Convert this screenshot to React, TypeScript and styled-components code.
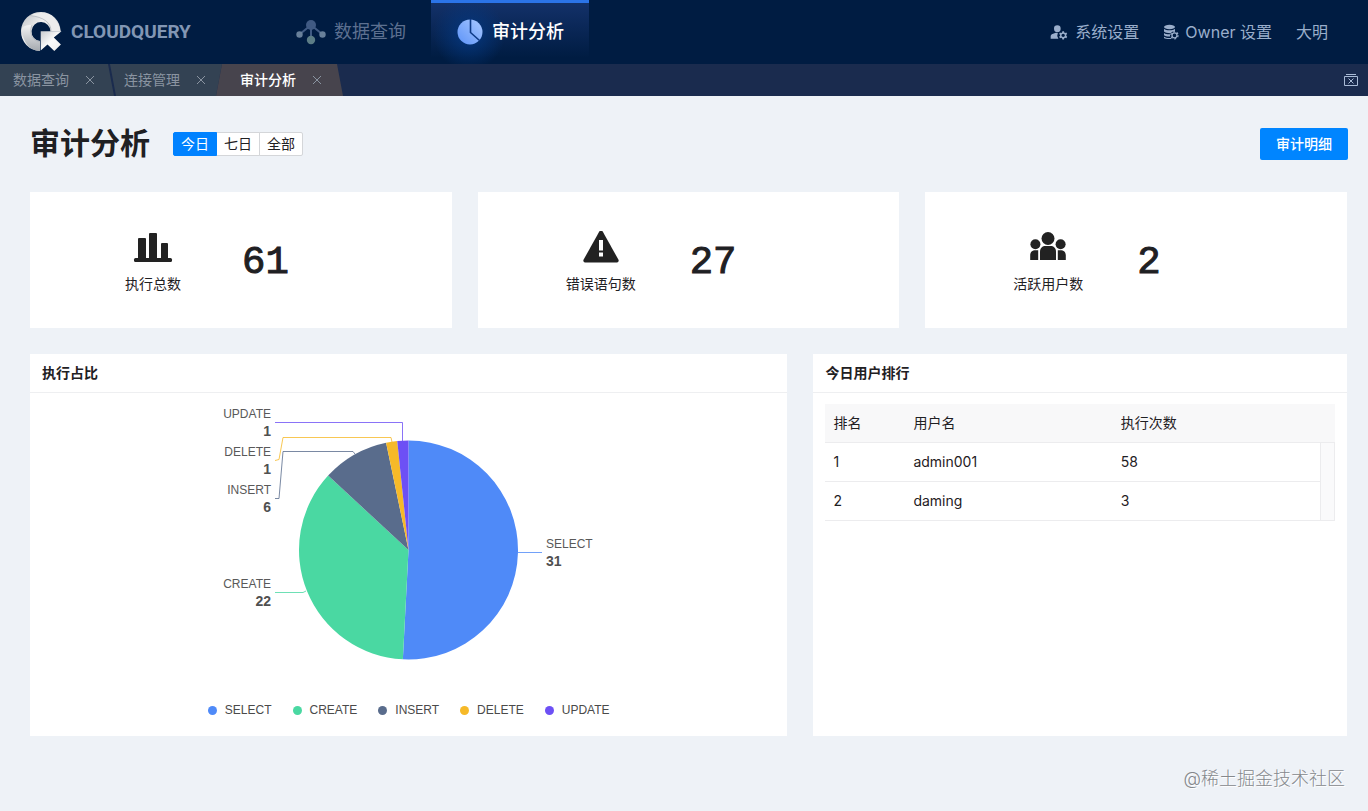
import React, { useState } from 'react';
import styled, { createGlobalStyle, css } from 'styled-components';
import { MdManageAccounts } from 'react-icons/md';

const uiFont = `Inter, "Noto Sans CJK SC", sans-serif`;
const chartFont = `"Liberation Sans", "Noto Sans CJK SC", sans-serif`;

const GlobalStyle = createGlobalStyle`
  * { box-sizing: border-box; }
  body {
    margin: 0;
    background: #eef2f7;
    color: #1f2023;
    font: 14px/22px ${uiFont};
  }
  button { font: inherit; color: inherit; cursor: pointer; }
  ul { list-style: none; margin: 0; padding: 0; }
`;

const Page = styled.div`
  min-height: 100vh;
  display: flex;
  flex-direction: column;
`;

/* ---------- header ---------- */

const Header = styled.header`
  height: 64px;
  display: flex;
  align-items: center;
  padding: 0 40px 0 20px;
  background: #001c42;
`;

const Brand = styled.a`
  display: flex;
  align-items: center;
  gap: 9px;
  width: 251px;
  text-decoration: none;
`;

const Wordmark = styled.span`
  font: bold 19px/32px Roboto, sans-serif;
  color: #8296b4;
`;

const MainNav = styled.nav`
  display: flex;
  align-self: stretch;
`;

const NavLink = styled.a<{ $active?: boolean }>`
  display: flex;
  align-items: center;
  gap: 8px;
  padding: 0 25px;
  font-size: 18px;
  text-decoration: none;
  color: #5d7090;
  ${(p) =>
    p.$active &&
    css`
      color: #fff;
      font-weight: 500;
      box-shadow: inset 0 3px #2b74e8;
      background: radial-gradient(circle at 38px 34px, #04377f 0, transparent 36px),
        linear-gradient(#14326b, #001c42 90%);
    `}
`;

const UserNav = styled.nav`
  display: flex;
  align-items: center;
  gap: 24px;
  margin-left: auto;
`;

const UserLink = styled.a`
  display: flex;
  align-items: center;
  gap: 6px;
  font-size: 16px;
  line-height: 24px;
  color: #9aaecb;
  text-decoration: none;
`;

/* ---------- tab strip ---------- */

const TabStrip = styled.div`
  height: 32px;
  display: flex;
  align-items: stretch;
  padding-right: 9px;
  background: #1a2b4e;
`;

const Tab = styled.div<{ $shape: 'first' | 'middle' | 'active' }>`
  display: flex;
  align-items: center;
  gap: 13px;
  color: #8a94a1;
  background: #334253;
  ${(p) =>
    p.$shape === 'first' &&
    css`
      padding: 0 16px 0 13px;
      clip-path: polygon(0 0, calc(100% - 6px) 0, 100% 100%, 0 100%);
    `}
  ${(p) =>
    p.$shape === 'middle' &&
    css`
      margin-left: -4px;
      padding: 0 13px 0 14px;
      clip-path: polygon(0 0, 100% 0, calc(100% - 6px) 100%, 6px 100%);
    `}
  ${(p) =>
    p.$shape === 'active' &&
    css`
      margin-left: -6px;
      padding: 0 18px 0 24px;
      color: #fff;
      font-weight: 500;
      background: #47444d;
      clip-path: polygon(6px 0, calc(100% - 6px) 0, 100% 100%, 0 100%);
    `}
`;

const TabLink = styled.a`
  color: inherit;
  text-decoration: none;
`;

const IconButton = styled.button`
  display: flex;
  align-items: center;
  justify-content: center;
  width: 16px;
  height: 16px;
  padding: 0;
  border: 0;
  background: none;
  color: #8a94a1;
`;

const CloseAll = styled(IconButton)`
  margin: auto 0 auto auto;
  color: #a9bbd6;
`;

/* ---------- content ---------- */

const Main = styled.main`
  flex: 1;
  display: flex;
  flex-direction: column;
  gap: 26px;
  padding: 26px 20px 0 30px;
`;

const TitleBar = styled.div`
  display: flex;
  align-items: center;
  gap: 23px;
  height: 44px;
`;

const Title = styled.h1`
  margin: 0;
  padding-bottom: 2px;
  font-size: 30px;
  line-height: 40px;
  font-weight: 700;
`;

const Segments = styled.fieldset`
  display: flex;
  margin: 0;
  padding: 0;
  border: 0;
`;

const Segment = styled.label`
  height: 24px;
  padding: 0 7px;
  margin-left: -1px;
  border: 1px solid #d4d6d9;
  background: #fff;
  line-height: 22px;
  cursor: pointer;
  &:first-of-type { border-radius: 2px 0 0 2px; margin-left: 0; }
  &:last-of-type { border-radius: 0 2px 2px 0; }
  &:has(input:checked) {
    position: relative;
    border-color: #0082ff;
    background: #0082ff;
    color: #fff;
  }
  input { position: absolute; opacity: 0; width: 0; height: 0; margin: 0; }
`;

const PrimaryButton = styled.button`
  height: 32px;
  margin-left: auto;
  padding: 0 16px;
  border: 0;
  border-radius: 2px;
  background: #0085ff;
  color: #fff;
  font-weight: 500;
`;

const Body = styled.div`
  display: flex;
  flex-direction: column;
  gap: 26px;
  padding-right: 1px;
`;

const StatRow = styled.section`
  display: grid;
  grid-template-columns: repeat(3, 1fr);
  gap: 26px;
`;

const StatCard = styled.article`
  display: flex;
  align-items: center;
  gap: 44px;
  height: 136px;
  padding: 5px 0 0 78px;
  background: #fff;
`;

const StatLabel = styled.div`
  display: flex;
  flex-direction: column;
  align-items: center;
  gap: 8px;
  width: 90px;
`;

const StatValue = styled.strong`
  font: 400 39px/48px "Liberation Mono", monospace;
  -webkit-text-stroke: 1px currentColor;
`;

const PanelRow = styled.section`
  display: grid;
  grid-template-columns: repeat(12, 1fr);
  gap: 26px;
`;

const Panel = styled.article<{ $span: number }>`
  grid-column: span ${(p) => p.$span};
  display: flex;
  flex-direction: column;
  min-height: 382px;
  background: #fff;
`;

const PanelTitle = styled.h2`
  margin: 0;
  padding: 8px 12px;
  border-bottom: 1px solid #eeeff1;
  font-size: 14px;
  line-height: 22px;
  font-weight: 700;
`;

const ChartBox = styled.figure`
  flex: 1;
  display: flex;
  flex-direction: column;
  align-items: center;
  gap: 23px;
  margin: 0;
  padding-top: 4px;
  font: 12px/20px ${chartFont};
`;

const Legend = styled.ul`
  display: flex;
  gap: 21px;
  color: #4a4a4a;
`;

const LegendItem = styled.li<{ $color: string }>`
  display: flex;
  align-items: center;
  gap: 8px;
  &::before {
    content: '';
    width: 9px;
    height: 9px;
    border-radius: 50%;
    background: ${(p) => p.$color};
  }
`;

const TableBox = styled.div`
  padding: 11px 12px;
`;

const RankTable = styled.table`
  width: 100%;
  table-layout: fixed;
  border-collapse: separate;
  border-spacing: 0;
  text-align: left;
  th, td {
    height: 39px;
    padding: 0 8px;
    border-bottom: 1px solid #ececee;
    font-weight: 400;
  }
  th { background: #f8f8f9; }
  th:first-child { width: 80px; }
  th:last-child { width: 15px; padding: 0; }
`;

const ScrollTrack = styled.td`
  background: #fafafb;
  border: 1px solid #ececee;
  border-top: 0;
`;

const Footer = styled.footer`
  padding: 4px 3px 20px;
  text-align: right;
  font-size: 18px;
  line-height: 26px;
  font-weight: 300;
  color: #85888c;
  text-shadow: 1px 1px #fff;
`;

/* ---------- drawings ---------- */

const LogoMark = () => (
  <svg width="42" height="42" viewBox="0 0 42 42" aria-hidden="true">
    <defs>
      <linearGradient id="ringA" x1="0" y1="0" x2="1" y2="1">
        <stop offset="0" stopColor="#b9bcc0" />
        <stop offset="0.4" stopColor="#f1f1f1" />
        <stop offset="1" stopColor="#a5abb3" />
      </linearGradient>
      <linearGradient id="ringB" x1="0" y1="0" x2="0" y2="1">
        <stop offset="0" stopColor="#f3f3f3" />
        <stop offset="1" stopColor="#a4a9af" />
      </linearGradient>
      <linearGradient id="arrow" x1="0" y1="0" x2="1" y2="1">
        <stop offset="0" stopColor="#c9ccd0" />
        <stop offset="0.5" stopColor="#fafafa" />
        <stop offset="1" stopColor="#ececec" />
      </linearGradient>
    </defs>
    <path fill="url(#ringA)" d="M21 1a19.5 19.5 0 0 1 19.5 19.5H30.5A9.500 9.500 0 1 0 20 30V40A19.500 19.500 0 0 1 21 1z" />
    <path fill="url(#ringB)" d="M1.500 18C3 31 9 39.500 20 40V30.500C12 30 9 22 12 14 6 14 3 15 1.500 18z" />
    <path fill="#ececec" d="M10 4.500C25-3 39 7 40.500 20H31C31 12 24 6 10 4.500z" />
    <path fill="none" stroke="#a0a6ae" strokeWidth="0.600" d="M10 4.500C24 6 31 12 31 20M12 14C9 22 12 30 20 30.500" />
    <path fill="url(#arrow)" d="M20.700 20.300H41.500L33.800 26.500 40.900 33.500 34.300 40 27.500 33.500 20.700 39.500z" />
  </svg>
);

const GraphIcon = () => (
  <svg width="30" height="26" viewBox="0 0 30 26" aria-hidden="true">
    <path d="M15 6L4 15M15 6L26 15M15 6V21" stroke="#405a83" strokeWidth="2" fill="none" />
    <circle cx="15" cy="6" r="5" fill="#405a83" />
    <circle cx="3.500" cy="15.500" r="3.200" fill="#68809a" />
    <circle cx="26.500" cy="15.500" r="3.200" fill="#68809a" />
    <circle cx="15" cy="21" r="4.200" fill="#5c7d86" />
  </svg>
);

const PieIcon = () => (
  <svg width="28" height="28" viewBox="0 0 28 28" aria-hidden="true">
    <defs>
      <linearGradient id="pieGlyph" x1="0" y1="1" x2="1" y2="0">
        <stop offset="0" stopColor="#5c93f8" />
        <stop offset="1" stopColor="#a9c8ff" />
      </linearGradient>
    </defs>
    <circle cx="14" cy="14" r="12.500" fill="url(#pieGlyph)" />
    <path d="M14.500 1V14.500L23.500 22.500" fill="none" stroke="#0e3a86" strokeWidth="1.600" />
  </svg>
);

const DatabaseGearIcon = () => (
  <svg width="16" height="16" viewBox="0 0 16 16" aria-hidden="true">
    <ellipse cx="6.500" cy="3" rx="5.500" ry="2.200" fill="currentColor" />
    <path d="M1 4.800c2 2 9 2 11 0v2.200c-2 .2-3.500 1-4.200 2.200C5 9.300 2 8.800 1 7.500zM1 9c1.500 1.200 3.800 1.400 6 1.300 0 .8 0 1.500.3 2.200C4.500 12.700 2 12.200 1 11.200zM1 12.700c1.500 1.200 4.500 1.400 6.800 1.200l.8 1C5.500 15.300 2 14.800 1 14z" fill="currentColor" />
    <circle cx="11.500" cy="11.300" r="2.500" fill="none" stroke="currentColor" strokeWidth="1.300" />
    <circle cx="11.500" cy="11.300" r="3.600" fill="none" stroke="currentColor" strokeWidth="1.200" strokeDasharray="1.900 1.870" />
  </svg>
);

const CloseIcon = () => (
  <svg width="10" height="10" viewBox="0 0 10 10" aria-hidden="true">
    <path d="M1 1l8 8M9 1l-8 8" stroke="currentColor" fill="none" />
  </svg>
);

const CloseAllIcon = () => (
  <svg width="16" height="16" viewBox="0 0 16 16" aria-hidden="true">
    <path d="M1.500 4.500h13v9h-13zM3 2.500h10M5.500 6.500l5 5M10.500 6.500l-5 5" stroke="currentColor" fill="none" />
  </svg>
);

const BarsIcon = () => (
  <svg width="40" height="34" viewBox="0 0 40 34" fill="#222" aria-hidden="true">
    <rect x="1" y="27" width="38" height="4" rx="1.500" />
    <rect x="5" y="7" width="8" height="22" rx="1" />
    <rect x="16" y="2" width="8" height="27" rx="1" />
    <rect x="28" y="12" width="7" height="17" rx="1" />
  </svg>
);

const WarningIcon = () => (
  <svg width="40" height="34" viewBox="0 0 40 34" aria-hidden="true">
    <path d="M18.300 0.600a2 2 0 0 1 3.400 0L37.500 28.800a1.800 1.800 0 0 1-1.600 2.600H4.100a1.800 1.800 0 0 1-1.600-2.600z" fill="#222" />
    <path d="M18 9h4v10.500h-4zM18 21.500h4v4h-4z" fill="#fff" />
  </svg>
);

const PeopleIcon = () => (
  <svg width="40" height="34" viewBox="0 0 40 34" fill="#222" aria-hidden="true">
    <circle cx="20" cy="7.500" r="6.500" />
    <circle cx="7.400" cy="13.200" r="5" />
    <circle cx="32.600" cy="13.200" r="5" />
    <path d="M12 29v-8.500c0-3.500 2.500-5.500 5.500-5.500h5c3 0 5.500 2 5.500 5.500V29z" />
    <path d="M2.200 29v-4.500c0-3.500 2-5.300 5.500-5.300h2.500V29zM37.800 29v-4.500c0-3.500-2-5.300-5.500-5.300h-2.500V29z" />
  </svg>
);

/* ---------- data ---------- */

type Slice = {
  name: string;
  value: number;
  color: string;
  labelX: number;
  labelY: number;
  leader: string;
};

const slices: Slice[] = [
  { name: 'SELECT', value: 31, color: '#4f8af8', labelX: 347, labelY: 151, leader: '319,155.500 343,155.500' },
  { name: 'CREATE', value: 22, color: '#4ad8a2', labelX: 72, labelY: 191, leader: '76,195.500 104,195.500 107,194' },
  { name: 'INSERT', value: 6, color: '#596c8c', labelX: 72, labelY: 97, leader: '76,101.500 80,101.500 84,54.500 154,54.500 156,57' },
  { name: 'DELETE', value: 1, color: '#f6b928', labelX: 72, labelY: 59, leader: '76,63.500 80,62.500 84,40.500 192,40.500 193,45' },
  { name: 'UPDATE', value: 1, color: '#6d50f5', labelX: 72, labelY: 21, leader: '76,25.500 203.500,25.500 203.500,44' },
];

const stats = [
  { label: '执行总数', value: 61, icon: <BarsIcon /> },
  { label: '错误语句数', value: 27, icon: <WarningIcon /> },
  { label: '活跃用户数', value: 2, icon: <PeopleIcon /> },
];

const ranking = [
  { name: 'admin001', count: 58 },
  { name: 'daming', count: 3 },
];

const PieChart = () => {
  const cx = 209.5;
  const cy = 153;
  const r = 109.5;
  const total = slices.reduce((sum, s) => sum + s.value, 0);
  const point = (v: number) => {
    const a = (v / total) * Math.PI * 2;
    return `${cx + r * Math.sin(a)} ${cy - r * Math.cos(a)}`;
  };
  let start = 0;
  return (
    <svg width="420" height="280" viewBox="0 0 420 280" role="img" aria-label="执行占比">
      {slices.map((s) => {
        const end = start + s.value;
        const d = `M${cx} ${cy}L${point(start)}A${r} ${r} 0 ${s.value * 2 > total ? 1 : 0} 1 ${point(end)}z`;
        start = end;
        const anchor = s.labelX > cx ? 'start' : 'end';
        return (
          <g key={s.name} textAnchor={anchor}>
            <path d={d} fill={s.color} />
            <polyline points={s.leader} fill="none" stroke={s.color} strokeOpacity="0.8" />
            <text x={s.labelX} y={s.labelY} fontSize="12" fill="#595959">{s.name}</text>
            <text x={s.labelX} y={s.labelY + 18} fontSize="14" fontWeight="700" fill="#505050">{s.value}</text>
          </g>
        );
      })}
    </svg>
  );
};

export default function App() {
  const [range, setRange] = useState('今日');
  return (
    <Page>
      <GlobalStyle />
      <Header>
        <Brand href="#">
          <LogoMark />
          <Wordmark>CLOUDQUERY</Wordmark>
        </Brand>
        <MainNav>
          <NavLink href="#query"><GraphIcon />数据查询</NavLink>
          <NavLink href="#audit" $active><PieIcon />审计分析</NavLink>
        </MainNav>
        <UserNav>
          <UserLink href="#system"><MdManageAccounts size={20} />系统设置</UserLink>
          <UserLink href="#owner"><DatabaseGearIcon />Owner 设置</UserLink>
          <UserLink href="#me">大明</UserLink>
        </UserNav>
      </Header>
      <TabStrip>
        <Tab $shape="first">
          <TabLink href="#query">数据查询</TabLink>
          <IconButton aria-label="关闭数据查询"><CloseIcon /></IconButton>
        </Tab>
        <Tab $shape="middle">
          <TabLink href="#connections">连接管理</TabLink>
          <IconButton aria-label="关闭连接管理"><CloseIcon /></IconButton>
        </Tab>
        <Tab $shape="active">
          <TabLink href="#audit">审计分析</TabLink>
          <IconButton aria-label="关闭审计分析"><CloseIcon /></IconButton>
        </Tab>
        <CloseAll aria-label="关闭全部"><CloseAllIcon /></CloseAll>
      </TabStrip>
      <Main>
        <TitleBar>
          <Title>审计分析</Title>
          <Segments aria-label="时间范围">
            {['今日', '七日', '全部'].map((r) => (
              <Segment key={r}>
                <input type="radio" name="range" checked={range === r} onChange={() => setRange(r)} />
                {r}
              </Segment>
            ))}
          </Segments>
          <PrimaryButton>审计明细</PrimaryButton>
        </TitleBar>
        <Body>
          <StatRow>
            {stats.map((s) => (
              <StatCard key={s.label}>
                <StatLabel>{s.icon}{s.label}</StatLabel>
                <StatValue>{s.value}</StatValue>
              </StatCard>
            ))}
          </StatRow>
          <PanelRow>
            <Panel $span={7}>
              <PanelTitle>执行占比</PanelTitle>
              <ChartBox>
                <PieChart />
                <Legend>
                  {slices.map((s) => (
                    <LegendItem key={s.name} $color={s.color}>{s.name}</LegendItem>
                  ))}
                </Legend>
              </ChartBox>
            </Panel>
            <Panel $span={5}>
              <PanelTitle>今日用户排行</PanelTitle>
              <TableBox>
                <RankTable>
                  <thead>
                    <tr>
                      <th scope="col">排名</th>
                      <th scope="col">用户名</th>
                      <th scope="col">执行次数</th>
                      <th />
                    </tr>
                  </thead>
                  <tbody>
                    {ranking.map((u, i) => (
                      <tr key={u.name}>
                        <td>{i + 1}</td>
                        <td>{u.name}</td>
                        <td>{u.count}</td>
                        {i === 0 && <ScrollTrack rowSpan={ranking.length} />}
                      </tr>
                    ))}
                  </tbody>
                </RankTable>
              </TableBox>
            </Panel>
          </PanelRow>
        </Body>
        <Footer>@稀土掘金技术社区</Footer>
      </Main>
    </Page>
  );
}
